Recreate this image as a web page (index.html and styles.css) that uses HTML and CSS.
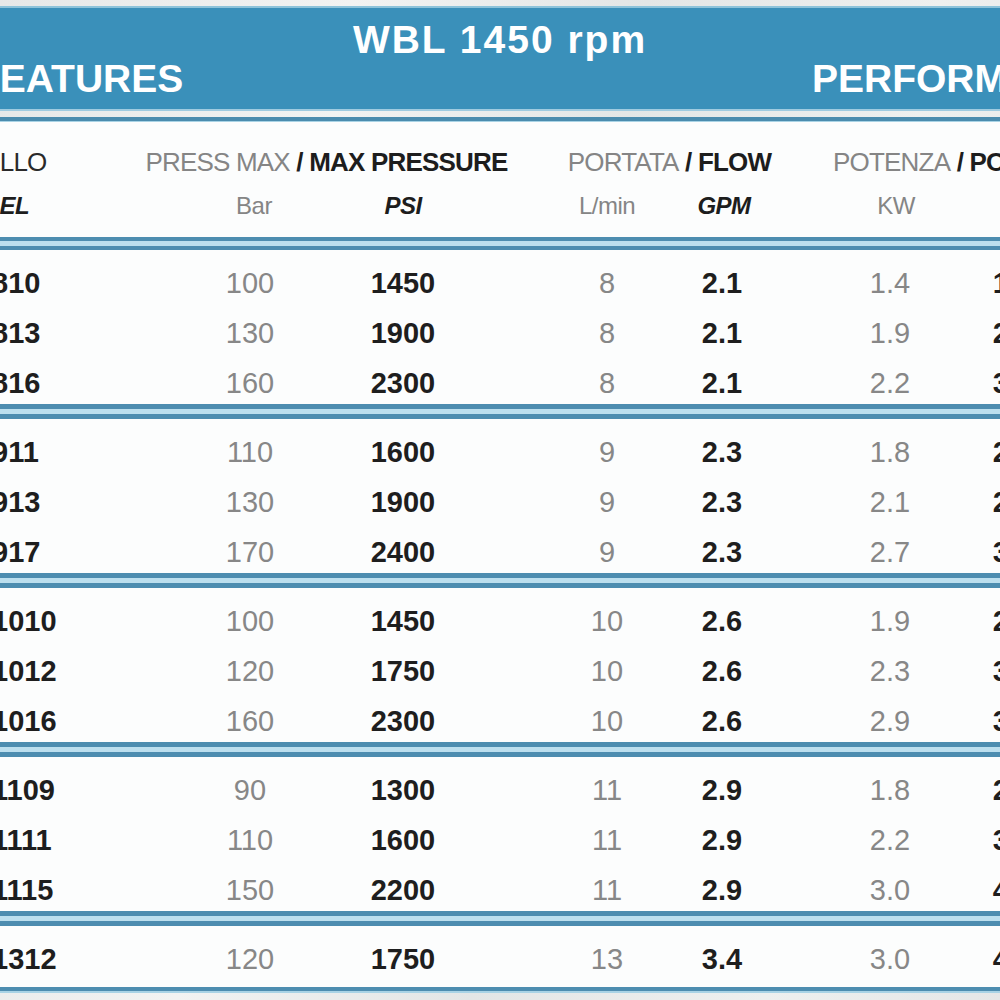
FILE: index.html
```html
<!DOCTYPE html>
<html lang="it">
<head>
<meta charset="utf-8">
<title>WBL 1450 rpm</title>
<link rel="stylesheet" href="styles.css">
</head>
<body>
<div class="sheet">
  <header class="band">
    <div class="band-title">WBL 1450 rpm</div>
    <div class="band-sub">
      <span class="band-left">FEATURES</span>
      <span class="band-right">PERFORMANCE</span>
    </div>
  </header>
  <div class="rule-top"></div>
  <div class="table">
    <div class="head">
      <div class="hrow">
        <div class="c-model"><span class="model-it">MODELLO</span></div>
        <div class="h-press"><span class="it">PRESS MAX</span>&nbsp;<b>/ MAX PRESSURE</b></div>
        <div class="h-flow"><span class="it">PORTATA</span>&nbsp;<b>/ FLOW</b></div>
        <div class="h-power"><span class="it">POTENZA</span>&nbsp;<b>/ POWER</b></div>
      </div>
      <div class="hrow units">
        <div class="c-model"><span class="model-en">MODEL</span></div>
        <div class="c-bar u-bar">Bar</div>
        <div class="c-psi en">PSI</div>
        <div class="c-lmin">L/min</div>
        <div class="c-gpm en u-gpm">GPM</div>
        <div class="c-kw u-kw">KW</div>
        <div class="c-hp en u-hp">HP</div>
      </div>
    </div>
    <div class="sep"></div>
    <div class="group">
      <div class="row"><div class="c-model">810</div><div class="c-bar">100</div><div class="c-psi">1450</div><div class="c-lmin">8</div><div class="c-gpm">2.1</div><div class="c-kw">1.4</div><div class="c-hp">1.9</div></div>
      <div class="row"><div class="c-model">813</div><div class="c-bar">130</div><div class="c-psi">1900</div><div class="c-lmin">8</div><div class="c-gpm">2.1</div><div class="c-kw">1.9</div><div class="c-hp">2.5</div></div>
      <div class="row"><div class="c-model">816</div><div class="c-bar">160</div><div class="c-psi">2300</div><div class="c-lmin">8</div><div class="c-gpm">2.1</div><div class="c-kw">2.2</div><div class="c-hp">3.0</div></div>
    </div>
    <div class="sep"></div>
    <div class="group">
      <div class="row"><div class="c-model">911</div><div class="c-bar">110</div><div class="c-psi">1600</div><div class="c-lmin">9</div><div class="c-gpm">2.3</div><div class="c-kw">1.8</div><div class="c-hp">2.4</div></div>
      <div class="row"><div class="c-model">913</div><div class="c-bar">130</div><div class="c-psi">1900</div><div class="c-lmin">9</div><div class="c-gpm">2.3</div><div class="c-kw">2.1</div><div class="c-hp">2.8</div></div>
      <div class="row"><div class="c-model">917</div><div class="c-bar">170</div><div class="c-psi">2400</div><div class="c-lmin">9</div><div class="c-gpm">2.3</div><div class="c-kw">2.7</div><div class="c-hp">3.6</div></div>
    </div>
    <div class="sep"></div>
    <div class="group">
      <div class="row"><div class="c-model">1010</div><div class="c-bar">100</div><div class="c-psi">1450</div><div class="c-lmin">10</div><div class="c-gpm">2.6</div><div class="c-kw">1.9</div><div class="c-hp">2.5</div></div>
      <div class="row"><div class="c-model">1012</div><div class="c-bar">120</div><div class="c-psi">1750</div><div class="c-lmin">10</div><div class="c-gpm">2.6</div><div class="c-kw">2.3</div><div class="c-hp">3.1</div></div>
      <div class="row"><div class="c-model">1016</div><div class="c-bar">160</div><div class="c-psi">2300</div><div class="c-lmin">10</div><div class="c-gpm">2.6</div><div class="c-kw">2.9</div><div class="c-hp">3.9</div></div>
    </div>
    <div class="sep"></div>
    <div class="group">
      <div class="row"><div class="c-model">1109</div><div class="c-bar">90</div><div class="c-psi">1300</div><div class="c-lmin">11</div><div class="c-gpm">2.9</div><div class="c-kw">1.8</div><div class="c-hp">2.4</div></div>
      <div class="row"><div class="c-model">1111</div><div class="c-bar">110</div><div class="c-psi">1600</div><div class="c-lmin">11</div><div class="c-gpm">2.9</div><div class="c-kw">2.2</div><div class="c-hp">3.0</div></div>
      <div class="row"><div class="c-model">1115</div><div class="c-bar">150</div><div class="c-psi">2200</div><div class="c-lmin">11</div><div class="c-gpm">2.9</div><div class="c-kw">3.0</div><div class="c-hp">4.0</div></div>
    </div>
    <div class="sep"></div>
    <div class="group">
      <div class="row"><div class="c-model">1312</div><div class="c-bar">120</div><div class="c-psi">1750</div><div class="c-lmin">13</div><div class="c-gpm">3.4</div><div class="c-kw">3.0</div><div class="c-hp">4.0</div></div>
    </div>
  </div>
  <div class="rule-bottom"></div>
</div>
</body>
</html>
```
FILE: styles.css
```css
html, body {
  margin: 0;
  padding: 0;
  width: 1000px;
  height: 1000px;
  overflow: hidden;
}

body {
  font-family: "Liberation Sans", Arial, sans-serif;
  background: linear-gradient(100deg, #e6e8e8 0%, #f2f3f2 30%, #e3e6e6 55%, #eef0ef 80%, #e5e7e7 100%);
  color: #1f1f1f;
}

.sheet {
  padding-top: 6px;
}

/* Blue title band */
.band {
  background: #3a90ba;
  border-top: 2px solid #8dc3da;
  border-bottom: 2px solid #9fcbe0;
  padding: 12px 0 11px;
  color: #ffffff;
  font-weight: bold;
  font-size: 39px;
  line-height: 39px;
  white-space: nowrap;
}

.band-title {
  text-align: center;
  letter-spacing: 2px;
}

.band-sub {
  display: grid;
  grid-template-columns: 812px auto;
}

.band-left {
  margin-left: -24px;
}

.rule-top {
  margin-top: 6px;
  height: 4px;
  background: #4b8cae;
  border-bottom: 1px solid #a9d3e5;
}

/* Table body */
.table {
  background: #fcfdfd;
  white-space: nowrap;
}

.head {
  padding: 25px 0 16px;
}

.hrow {
  display: flex;
  align-items: flex-start;
  font-size: 26px;
  line-height: 30px;
  letter-spacing: -0.8px;
}

.hrow.units {
  margin-top: 14px;
  font-size: 24px;
  letter-spacing: -0.5px;
  color: #858585;
}

.it {
  color: #858585;
  font-weight: normal;
}

.hrow b {
  color: #1d1d1d;
}

.en {
  color: #1d1d1d;
  font-weight: bold;
  font-style: italic;
}

.model-it {
  display: inline-block;
  margin-left: -67px;
  color: #2a2a2a;
}

.model-en {
  display: inline-block;
  margin-left: -47px;
  color: #1d1d1d;
  font-weight: bold;
  font-style: italic;
}

.h-press, .h-flow, .h-power {
  flex: none;
  display: flex;
}

.h-press {
  width: 253px;
  justify-content: center;
}

.h-flow {
  margin-left: 104px;
  width: 225px;
  justify-content: center;
}

.h-power {
  margin-left: 51px;
}

/* Column cells */
.c-model {
  margin-left: -8px;
  width: 208px;
  flex: none;
}

.c-bar, .c-psi, .c-lmin, .c-gpm, .c-kw, .c-hp {
  width: 100px;
  flex: none;
  text-align: center;
  box-sizing: border-box;
}

.c-psi { margin-left: 53px; }
.c-lmin { margin-left: 104px; }
.c-gpm { margin-left: 15px; }
.c-kw { margin-left: 68px; }
.c-hp { margin-left: 23px; }

.u-bar { padding-left: 8px; }
.u-gpm { padding-left: 4px; }
.u-kw { padding-left: 12px; }
.u-hp { padding-left: 14px; }

/* Separators */
.sep {
  height: 5px;
  background: #bcdfee;
  border-top: 5px solid #4d8db0;
  border-bottom: 5px solid #4d8db0;
}

.head + .sep {
  border-top-width: 4px;
  border-bottom-width: 4px;
}

.group {
  padding-top: 16px;
}

.row {
  display: flex;
  align-items: flex-start;
  height: 50px;
  font-size: 29px;
  line-height: 34px;
  font-weight: bold;
  color: #1e1e1e;
}

.row:last-child {
  height: 38px;
}

.row:only-child {
  height: 45px;
}

.row .c-bar,
.row .c-lmin,
.row .c-kw {
  color: #878787;
  font-weight: normal;
}

.rule-bottom {
  height: 4px;
  background: #4d8db0;
  border-bottom: 2px solid #a9d3e5;
}
```
